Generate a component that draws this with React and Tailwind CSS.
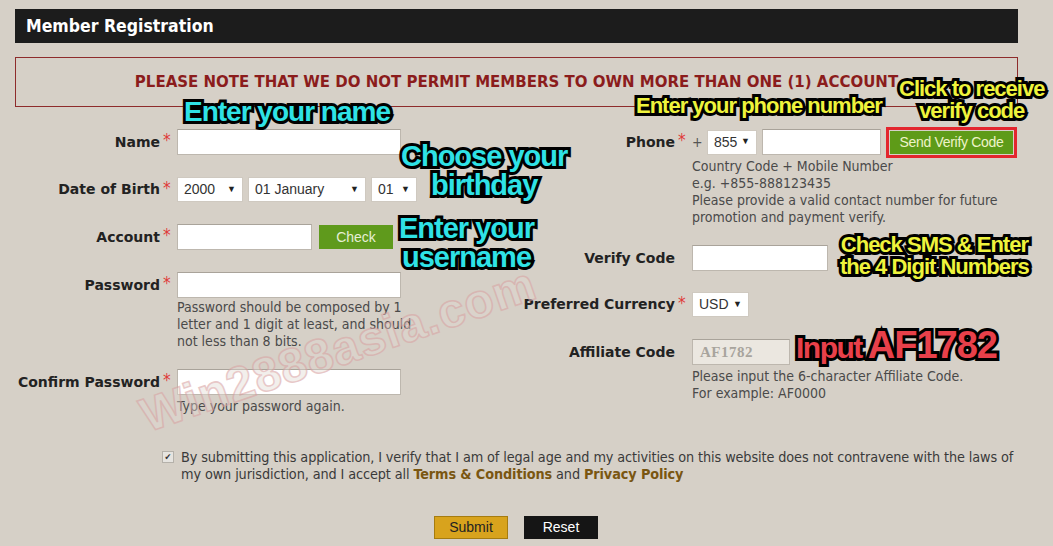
const FORM = "font-['DejaVu_Sans_Condensed','DejaVu_Sans',sans-serif]"
const ANN = "absolute font-['Liberation_Sans',Arial,sans-serif] font-bold leading-none tracking-[-1px] text-center [-webkit-text-stroke:6px_#000] [paint-order:stroke_fill]"

function Label({ text, req, width }) {
    return (
        <>
            <span className={`${width} text-right font-bold text-[14px] text-[#222] font-['DejaVu_Sans',sans-serif]`}>{text}</span>
            <span className="w-[17px] pl-[3px] -mt-[3px] text-[17px] leading-none text-[#e03a3a]">{req ? '*' : ''}</span>
        </>
    )
}

function Input({ w, children, className = '' }) {
    return (
        <div className={`${w} h-[26px] bg-white border border-[#bdb7ae] border-t-[#a9a39a] ${className}`}>{children}</div>
    )
}

function Select({ w, value }) {
    return (
        <div className={`${w} h-[25px] bg-white border border-[#cfc9c0] flex items-center justify-between px-[6px] font-['Liberation_Sans',Arial,sans-serif] text-[14px] text-[#333]`}>
            <span>{value}</span>
            <span className="text-[9px] text-[#222]">▼</span>
        </div>
    )
}

function Help({ children }) {
    return <div className="text-[14px] leading-[17px] text-[#4a4a4a]">{children}</div>
}

export default function App() {
    return (
        <div className={`relative w-[1053px] h-[546px] overflow-hidden bg-[#d6d0c7] ${FORM}`}>
            <div className="mx-[15px] mt-[9px] w-[1003px] h-[34px] bg-[#1c1c1c] flex items-center px-[11px]">
                <span className="text-white font-bold text-[17.5px]">Member Registration</span>
            </div>
            <div className="mx-[15px] mt-[14px] w-[1003px] h-[50px] border border-[#8e2b2b] flex items-center justify-center">
                <span className="text-[#8b1c1c] font-bold text-[15px] font-['DejaVu_Sans',sans-serif]">PLEASE NOTE THAT WE DO NOT PERMIT MEMBERS TO OWN MORE THAN ONE (1) ACCOUNT</span>
            </div>

            <div className="flex mt-[22px]">
                {/* left column */}
                <div className="w-[500px] flex flex-col">
                    <div className="flex items-center">
                        <Label text="Name" req width="w-[160px]" />
                        <Input w="w-[224px]" />
                    </div>
                    <div className="flex items-center mt-[22px]">
                        <Label text="Date of Birth" req width="w-[160px]" />
                        <div className="flex gap-[5px]">
                            <Select w="w-[66px]" value="2000" />
                            <Select w="w-[118px]" value="01 January" />
                            <Select w="w-[46px]" value="01" />
                        </div>
                    </div>
                    <div className="flex items-center mt-[22px]">
                        <Label text="Account" req width="w-[160px]" />
                        <Input w="w-[135px]" />
                        <button className="ml-[7px] w-[74px] h-[24px] bg-[#5f9a1c] text-[#e6efd6] text-[14px] font-['Liberation_Sans',Arial,sans-serif]">Check</button>
                    </div>
                    <div className="flex mt-[22px]">
                        <div className="flex items-center h-[26px]">
                            <Label text="Password" req width="w-[160px]" />
                        </div>
                        <div className="flex flex-col">
                            <Input w="w-[224px]" />
                            <div className="mt-[1px]">
                                <Help>Password should be composed by 1<br />letter and 1 digit at least, and should<br />not less than 8 bits.</Help>
                            </div>
                        </div>
                    </div>
                    <div className="flex mt-[19px]">
                        <div className="flex items-center h-[26px]">
                            <Label text="Confirm Password" req width="w-[160px]" />
                        </div>
                        <div className="flex flex-col">
                            <Input w="w-[224px]" />
                            <div className="mt-[3px]">
                                <Help>Type your password again.</Help>
                            </div>
                        </div>
                    </div>
                </div>

                {/* right column */}
                <div className="flex flex-col">
                    <div className="flex">
                        <div className="flex items-center h-[26px]">
                            <Label text="Phone" req width="w-[175px]" />
                        </div>
                        <div className="flex flex-col">
                            <div className="flex items-center h-[26px]">
                                <span className="text-[14px] text-[#555] w-[15px]">+</span>
                                <Select w="w-[50px]" value="855" />
                                <Input w="w-[119px]" className="ml-[5px]" />
                                <div className="ml-[5px] border-[3px] border-[#e3262e] p-[1px] h-[31px] flex items-center">
                                    <button className="w-[123px] h-[23px] bg-[#5e9b18] text-[#eef3c8] text-[14px] font-['Liberation_Sans',Arial,sans-serif] tracking-[-0.3px]">Send Verify Code</button>
                                </div>
                            </div>
                            <div className="mt-[3px]">
                                <Help>Country Code + Mobile Number<br />e.g. +855-888123435<br />Please provide a valid contact number for future<br />promotion and payment verify.</Help>
                            </div>
                        </div>
                    </div>
                    <div className="flex items-center mt-[19px]">
                        <Label text="Verify Code" width="w-[175px]" />
                        <Input w="w-[136px]" />
                    </div>
                    <div className="flex items-center mt-[21px]">
                        <Label text="Preferred Currency" req width="w-[175px]" />
                        <Select w="w-[57px]" value="USD" />
                    </div>
                    <div className="flex mt-[22px]">
                        <div className="flex items-center h-[26px]">
                            <Label text="Affiliate Code" width="w-[175px]" />
                        </div>
                        <div className="flex flex-col">
                            <Input w="w-[98px]" className="!bg-[#ebe7e0] flex items-center px-[7px]">
                                <span className="font-['Liberation_Serif',serif] font-bold text-[15px] text-[#a8a49d] tracking-[0.5px]">AF1782</span>
                            </Input>
                            <div className="mt-[3px]">
                                <Help>Please input the 6-character Affiliate Code.<br />For example: AF0000</Help>
                            </div>
                        </div>
                    </div>
                </div>
            </div>

            <div className="flex mt-[34px] pl-[162px]">
                <div className="w-[12px] h-[12px] mt-[2px] bg-[#e6e4e0] border border-[#b5b1aa] flex items-center justify-center text-[9px] leading-none text-[#333]">✔</div>
                <p className="ml-[7px] text-[14.3px] leading-[17px] text-[#3a3a3a] tracking-[-0.1px]">
                    By submitting this application, I verify that I am of legal age and my activities on this website does not contravene with the laws of<br />my own jurisdiction, and I accept all <b className="text-[#7a5611]">Terms &amp; Conditions</b> and <b className="text-[#7a5611]">Privacy Policy</b>
                </p>
            </div>

            <div className="flex justify-center gap-[16px] mt-[33px] pr-[21px] font-['Liberation_Sans',Arial,sans-serif]">
                <button className="w-[74px] h-[23px] bg-[#d8a31d] border border-[#a67c10] text-[#222] text-[14px]">Submit</button>
                <button className="w-[74px] h-[23px] bg-[#151515] text-white text-[14px]">Reset</button>
            </div>

            {/* watermark */}
            <div className="absolute left-[150px] top-[392px] origin-[0%_100%] rotate-[-19deg] leading-none font-['Liberation_Sans',Arial,sans-serif] font-bold text-[48px] tracking-[1px] text-[#e2dad3]/70 [-webkit-text-stroke:1.5px_#d9a5a5] opacity-60">
                Win2888asia.com
            </div>

            {/* annotations */}
            <div className={`${ANN} left-[184px] top-[98px] text-[28px] text-[#2fe2e6]`}>Enter your name</div>
            <div className={`${ANN} left-[401px] top-[142px] text-[29px] leading-[31px] text-[#2fe2e6]`}>Choose your<br />birthday</div>
            <div className={`${ANN} left-[399px] top-[214px] text-[29px] leading-[32px] text-[#2fe2e6]`}>Enter your<br />username</div>
            <div className={`${ANN} left-[636px] top-[95px] text-[22px] text-[#eef33c]`}>Enter your phone number</div>
            <div className={`${ANN} left-[899px] top-[78px] text-[22px] leading-[23px] text-[#eef33c]`}>Click to receive<br />verify code</div>
            <div className={`${ANN} left-[840px] top-[234px] text-[22px] leading-[24px] text-[#eef33c]`}>Check SMS &amp; Enter<br />the 4 Digit Numbers</div>
            <div className={`${ANN} left-[796px] top-[326px] text-[#e8404a] flex items-end`}>
                <span className="text-[30px] tracking-[-1.5px] mr-[6px] mb-[1px]">Input</span>
                <span className="text-[38px]">AF1782</span>
            </div>
        </div>
    )
}
